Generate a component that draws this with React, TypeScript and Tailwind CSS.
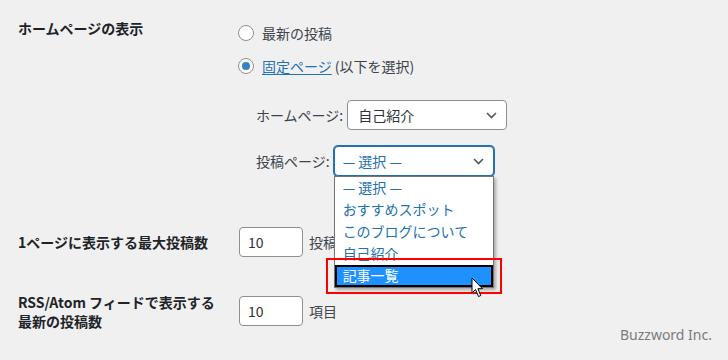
import React from 'react';

const options = ['— 選択 —', 'おすすめスポット', 'このブログについて', '自己紹介', '記事一覧'];

function Chevron() {
  return (
    <svg width="11" height="7" viewBox="0 0 11 7" className="shrink-0">
      <polyline points="1,1 5.5,5.5 10,1" fill="none" stroke="#50575e" strokeWidth="1.6" />
    </svg>
  );
}

function Radio({ checked }: { checked?: boolean }) {
  return (
    <span className="w-4 h-4 rounded-full border border-[#8c8f94] bg-white flex items-center justify-center shrink-0">
      {checked && <span className="w-2 h-2 rounded-full bg-[#3582c4]" />}
    </span>
  );
}

function Cursor() {
  return (
    <svg width="14" height="21" viewBox="0 0 14 21">
      <path
        d="M1 1 L1 16 L4.5 12.5 L7.5 19.5 L9.8 18.5 L6.9 11.7 L11.5 11.7 Z"
        fill="#fff"
        stroke="#000"
        strokeWidth="1"
        strokeLinejoin="round"
      />
    </svg>
  );
}

export default function App() {
  return (
    <div className="w-[728px] h-[360px] bg-[#f0f0f1] relative overflow-hidden text-[14px] text-[#3c434a] font-['Noto_Sans_CJK_JP','Noto_Sans',sans-serif]">
      {/* ホームページの表示 */}
      <div className="flex pt-[18px]">
        <div className="w-[238px] pl-[18px] font-bold leading-5 text-[#1d2327]">ホームページの表示</div>
        <div className="pt-[5px]">
          <div className="flex items-center gap-2 h-5">
            <Radio />
            <span>最新の投稿</span>
          </div>
          <div className="flex items-center gap-2 h-5 mt-[13px]">
            <Radio checked />
            <span>
              <a className="text-[#2271b1] underline underline-offset-2">固定ページ</a> (以下を選択)
            </span>
          </div>

          <div className="ml-[18px] mt-[24px]">
            <div className="flex items-center">
              <span>ホームページ:</span>
              <div className="ml-1 w-[160px] h-[30px] border border-[#8c8f94] rounded-[4px] bg-white flex items-center justify-between pl-[10px] pr-[9px] text-[#2c3338]">
                <span>自己紹介</span>
                <Chevron />
              </div>
            </div>
            <div className="flex items-center mt-[16px]">
              <span>投稿ページ:</span>
              <div className="ml-1 relative w-[160px] h-[30px]">
                <div className="w-full h-full border border-[#2271b1] shadow-[0_0_0_1px_#2271b1] rounded-[4px] bg-white flex items-center justify-between pl-[8px] pr-[9px] text-[#2271b1]">
                  <span>— 選択 —</span>
                  <Chevron />
                </div>

                {/* open dropdown list */}
                <div className="absolute left-0 top-[30px] w-[160px] z-10 bg-white border border-[#767676] shadow-[2px_2px_3px_rgba(0,0,0,0.3)]">
                  {options.map((o, i) =>
                    i === options.length - 1 ? (
                      <div
                        key={o}
                        className="h-[22px] leading-[17px] pl-[6px] bg-[#1e90ff] text-white border-2 border-black"
                      >
                        {o}
                      </div>
                    ) : (
                      <div key={o} className="h-[22px] leading-[20px] pl-2 text-[#2271b1]">
                        {o}
                      </div>
                    )
                  )}
                  <div className="absolute left-[-9px] top-[81px] w-[176px] h-[36px] border-2 border-[#ff0000]" />
                  <div className="absolute left-[136px] top-[100px]">
                    <Cursor />
                  </div>
                </div>
              </div>
            </div>
          </div>
        </div>
      </div>

      {/* 1ページに表示する最大投稿数 */}
      <div className="flex items-center mt-[51px]">
        <div className="w-[239px] pl-[18px] font-bold leading-5 text-[#1d2327]">1ページに表示する最大投稿数</div>
        <div className="w-[64px] h-[30px] border border-[#8c8f94] rounded-[4px] bg-white flex items-center pl-2 text-[#2c3338]">10</div>
        <span className="ml-[6px]">投稿</span>
      </div>

      {/* RSS/Atom */}
      <div className="flex items-start mt-[39px]">
        <div className="w-[239px] pl-[18px] mt-[-3px] font-bold leading-[19px] text-[#1d2327]">
          RSS/Atom フィードで表示する
          <br />
          最新の投稿数
        </div>
        <div className="w-[64px] h-[30px] border border-[#8c8f94] rounded-[4px] bg-white flex items-center pl-2 text-[#2c3338]">10</div>
        <span className="ml-[6px] leading-[30px]">項目</span>
      </div>

      <div className="absolute right-[16px] bottom-[15px] text-[14px] text-[#7b7b7b] font-['Noto_Sans',sans-serif]">Buzzword Inc.</div>
    </div>
  );
}
